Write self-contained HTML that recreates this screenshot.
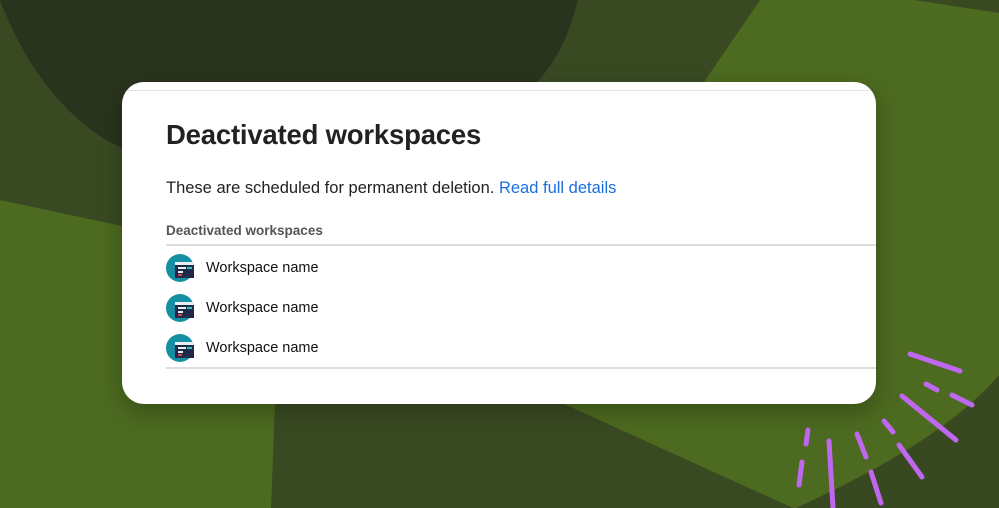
<!DOCTYPE html>
<html><head><style>
body{margin:0;width:999px;height:508px;overflow:hidden;position:relative;font-family:"Liberation Sans",sans-serif;background:#4c6a20}
svg.bg{position:absolute;left:0;top:0}
.card{position:absolute;left:122px;top:82px;width:754px;height:322px;background:#fff;border-radius:22px;box-shadow:0 8px 24px rgba(0,0,0,.25);overflow:hidden}
.topline{position:absolute;left:0;right:0;top:8px;height:1px;background:#e2e2e2}
h1{position:absolute;left:44px;top:37px;margin:0;font-size:27.5px;font-weight:bold;color:#222;letter-spacing:-0.2px}
.desc{position:absolute;left:44px;top:97px;font-size:16.5px;color:#222}
.desc a{color:#1a6fe0;text-decoration:none}
.th{position:absolute;left:44px;top:141px;font-size:13.5px;font-weight:bold;color:#555}
.line{position:absolute;left:44px;right:0;height:2px;background:#ddd}
.row{position:absolute;left:44px;height:30px;display:flex;align-items:center;font-size:14.5px;color:#111}
.row svg{margin-right:12px}
</style></head><body>
<svg class="bg" width="999" height="508">
<path d="M0 0 L760 0 L704 82 L850 100 L850 380 L564 404 L793 508 L271 508 L275 404 L140 380 L122 226 L0 200 Z" fill="#394a22"/>
<path d="M0 0 L578 0 C568 40 553 65 537 82 L300 120 L140 160 L122 148 C80 130 30 80 0 0 Z" fill="#29331d"/>
<path d="M914 0 L999 0 L999 13 Z" fill="#394a22"/>
<path d="M999 375 C960 420 900 460 796 508 L999 508 Z" fill="#384821"/>
<g stroke="#c067f0" stroke-width="5" stroke-linecap="round" fill="none">
<path d="M910 354 L960 371"/><path d="M926 384 L937 390"/><path d="M952 395 L972 405"/>
<path d="M902 396 L956 440"/><path d="M884 421 L893 432"/><path d="M899 445 L922 477"/>
<path d="M857 434 L866 457"/><path d="M871 472 L881 503"/><path d="M829 441 L833 508"/>
<path d="M808 430 L806 444"/><path d="M802 462 L799 485"/>
</g>
</svg>
<div class="card">
<div class="topline"></div>
<h1>Deactivated workspaces</h1>
<div class="desc">These are scheduled for permanent deletion. <a>Read full details</a></div>
<div class="th">Deactivated workspaces</div>
<div class="line" style="top:162px"></div>
<div class="row" style="top:171px"><svg width="28" height="28" viewBox="0 0 28 28"><circle cx="14" cy="14" r="14" fill="#168ea3"/><rect x="9" y="8" width="19" height="16" fill="#1e2a47"/><rect x="9" y="8" width="19" height="3" fill="#e8eef5"/><rect x="12" y="13" width="8" height="2" fill="#e8eef5"/><rect x="21" y="13" width="5" height="2" fill="#2ec4c4"/><rect x="12" y="17" width="5" height="2" fill="#e8eef5"/><rect x="12" y="20" width="4" height="2" fill="#e23a4a"/></svg>Workspace name</div>
<div class="row" style="top:211px"><svg width="28" height="28" viewBox="0 0 28 28"><circle cx="14" cy="14" r="14" fill="#168ea3"/><rect x="9" y="8" width="19" height="16" fill="#1e2a47"/><rect x="9" y="8" width="19" height="3" fill="#e8eef5"/><rect x="12" y="13" width="8" height="2" fill="#e8eef5"/><rect x="21" y="13" width="5" height="2" fill="#2ec4c4"/><rect x="12" y="17" width="5" height="2" fill="#e8eef5"/><rect x="12" y="20" width="4" height="2" fill="#e23a4a"/></svg>Workspace name</div>
<div class="row" style="top:251px"><svg width="28" height="28" viewBox="0 0 28 28"><circle cx="14" cy="14" r="14" fill="#168ea3"/><rect x="9" y="8" width="19" height="16" fill="#1e2a47"/><rect x="9" y="8" width="19" height="3" fill="#e8eef5"/><rect x="12" y="13" width="8" height="2" fill="#e8eef5"/><rect x="12" y="20" width="4" height="2" fill="#e23a4a"/><rect x="12" y="17" width="5" height="2" fill="#e8eef5"/><rect x="21" y="13" width="5" height="2" fill="#2ec4c4"/></svg>Workspace name</div>
<div class="line" style="top:285px"></div>
</div>
</body></html>
